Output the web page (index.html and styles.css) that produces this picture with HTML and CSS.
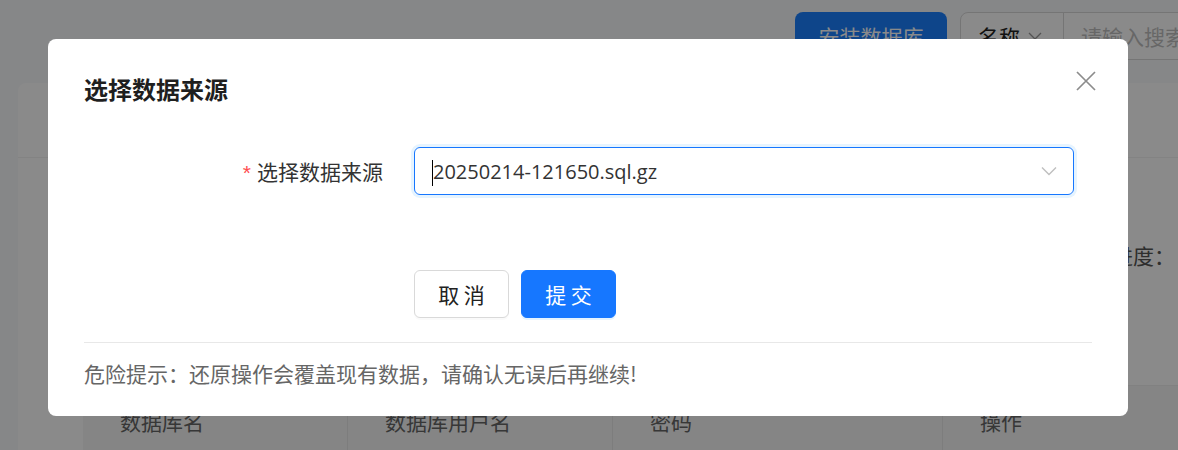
FILE: index.html
```html
<!DOCTYPE html>
<html lang="zh-CN">
<head>
  <meta charset="UTF-8" />
  <title>数据库</title>
  <link rel="stylesheet" href="styles.css">
</head>
<body>
<div class="page">
  <div class="toolbar">
    <button class="btn-install">安装数据库</button>
    <div class="search">
      <div class="search-type">名称
        <svg width="14" height="8" viewBox="0 0 14 8"><path d="M1 1l6 6 6-6" fill="none" stroke="#999" stroke-width="1.3"/></svg>
      </div>
      <div class="search-input">请输入搜索内容</div>
    </div>
  </div>

  <div class="card">
    <div class="card-head"></div>
    <div class="card-body">
      <div class="progress-row">
        <span>恢复进度：</span>
        <i class="dot"></i>
      </div>
      <div class="db-table">
        <div class="th col-1">数据库名</div>
        <div class="th col-2">数据库用户名</div>
        <div class="th col-3">密码</div>
        <div class="th col-4">操作</div>
      </div>
    </div>
  </div>
</div>

<div class="mask"></div>

<div class="dialog">
  <div class="dialog-header">
    <div class="dialog-title">选择数据来源</div>
    <button class="dialog-close" aria-label="close">
      <svg width="24" height="24" viewBox="0 0 24 24"><path d="M3 3l18 18M21 3L3 21" stroke="#8c8c8c" stroke-width="1.7" fill="none"/></svg>
    </button>
  </div>

  <div class="form-row">
    <label class="form-label"><span class="req">*</span>选择数据来源</label>
    <div class="select">
      <span class="caret"></span>
      <span class="select-value">20250214-121650.sql.gz</span>
      <svg class="select-arrow" width="16" height="10" viewBox="0 0 16 10"><path d="M1 1.5l7 7 7-7" fill="none" stroke="#bfbfbf" stroke-width="1.4"/></svg>
    </div>
  </div>

  <div class="form-actions">
    <button class="btn">取 消</button>
    <button class="btn btn-primary">提 交</button>
  </div>

  <div class="divider"></div>

  <div class="warning">危险提示：还原操作会覆盖现有数据，请确认无误后再继续!</div>
</div>
</body>
</html>
```

FILE: styles.css
```css
body {
  margin: 0;
  font-family: "Noto Sans CJK SC", "Noto Sans", sans-serif;
  background: #f8f9fc;
  overflow: hidden;
  height: 450px;
}

.page {
  width: 1400px;
}

/* top toolbar */
.toolbar {
  display: flex;
  align-items: center;
  padding: 12px 0 0 795px;
  gap: 13px;
  height: 48px;
}

.btn-install {
  width: 152px;
  height: 48px;
  border: none;
  border-radius: 8px;
  background: #1a80ff;
  color: #fff;
  font-family: inherit;
  font-size: 21px;
}

.search {
  display: flex;
  height: 46px;
  border: 1px solid #d9d9d9;
  border-radius: 8px;
  background: #fff;
}

.search-type {
  width: 103px;
  box-sizing: border-box;
  padding-left: 17px;
  display: flex;
  align-items: center;
  gap: 8px;
  font-size: 21px;
  color: #222;
  border-right: 1px solid #d9d9d9;
}

.search-input {
  width: 260px;
  padding-left: 17px;
  display: flex;
  align-items: center;
  font-size: 21px;
  color: #bfbfbf;
}

/* card under the dialog */
.card {
  margin: 23px 0 0 18px;
  background: #fff;
  border-radius: 8px;
  height: 380px;
}

.card-head {
  height: 74px;
  border-bottom: 1px solid #f3f3f3;
}

.card-body {
  padding: 0 0 0 65px;
}

.progress-row {
  display: flex;
  align-items: center;
  gap: 12px;
  padding: 82px 0 0 987px;
  height: 30px;
  font-size: 21px;
  color: #555;
}

.dot {
  width: 8px;
  height: 8px;
  border-radius: 50%;
  background: #52c41a;
}

.db-table {
  display: flex;
  margin-top: 115px;
  height: 70px;
  background: #f5f5f5;
  border-top: 1px solid #eee;
}

.th {
  padding: 20px 0 0 37px;
  line-height: 30px;
  font-size: 21px;
  color: #666;
  box-sizing: border-box;
  border-right: 1px solid #e8e8e8;
}

.col-1 { width: 265px; }
.col-2 { width: 265px; }
.col-3 { width: 330px; }
.col-4 { width: 300px; border-right: none; }

.mask {
  position: fixed;
  inset: 0;
  background: rgba(0, 0, 0, 0.46);
}

/* dialog */
.dialog {
  position: fixed;
  left: 48px;
  top: 39px;
  width: 1080px;
  box-sizing: border-box;
  padding: 34px 36px 28px;
  background: #fff;
  border-radius: 8px;
}

.dialog-header {
  display: flex;
  justify-content: space-between;
  align-items: flex-start;
}

.dialog-title {
  font-size: 24px;
  line-height: 32px;
  font-weight: 700;
  color: #1f1f1f;
}

.dialog-close {
  width: 24px;
  height: 24px;
  margin: -4px -6px 0 0;
  padding: 0;
  border: none;
  background: none;
}

.dialog-close svg {
  display: block;
}

.form-row {
  display: flex;
  align-items: center;
  margin-top: 42px;
}

.form-label {
  width: 330px;
  padding-right: 31px;
  box-sizing: border-box;
  text-align: right;
  font-size: 21px;
  color: #333;
}

.req {
  color: #ff4d4f;
  margin-right: 6px;
  font-family: "Liberation Sans", sans-serif;
}

.select {
  width: 660px;
  height: 48px;
  box-sizing: border-box;
  border: 1px solid #1677ff;
  border-radius: 6px;
  box-shadow: 0 0 0 3px rgba(5, 145, 255, 0.1);
  display: flex;
  align-items: center;
  padding: 0 16px 0 17px;
}

.caret {
  width: 1px;
  height: 26px;
  background: #000;
  margin-top: 4px;
}

.select-value {
  flex: 1;
  font-family: "Open Sans", "Noto Sans", sans-serif;
  font-size: 20px;
  color: #333;
}

.form-actions {
  display: flex;
  gap: 12px;
  margin: 75px 0 0 330px;
}

.btn {
  width: 95px;
  height: 48px;
  border: 1px solid #d9d9d9;
  border-radius: 6px;
  background: #fff;
  color: #222;
  font-family: inherit;
  font-size: 21px;
  box-shadow: 0 2px 0 rgba(0, 0, 0, 0.02);
}

.btn-primary {
  background: #1677ff;
  border-color: #1677ff;
  color: #fff;
  box-shadow: 0 2px 0 rgba(5, 145, 255, 0.1);
}

.divider {
  height: 1px;
  background: #e8e8e8;
  margin-top: 24px;
}

.warning {
  margin-top: 15px;
  line-height: 30px;
  font-size: 21px;
  color: #666;
}
```
